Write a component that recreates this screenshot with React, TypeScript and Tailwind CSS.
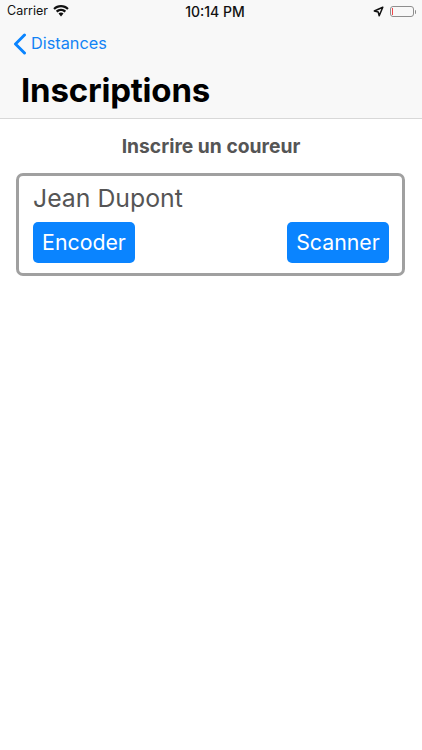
export default function App() {
  const font = "font-['Inter','Liberation_Sans',sans-serif]";
  return (
    <div className={`w-[422px] h-[750px] bg-white flex flex-col overflow-hidden ${font}`}>
      <div className="h-[119px] bg-[#f8f8f8] border-b border-[#d8d8d8] flex flex-col">
        <div className="h-[23px] pl-[7px] pr-[6px] flex items-center relative text-[#111] text-[12.500px]">
          <span>Carrier</span>
          <svg className="ml-[5px] mb-[2px]" width="16" height="12" viewBox="0 0 16 12" fill="#111">
            <path d="M8 0C5 0 2.300 1.200.300 3.200l1.500 1.600C3.400 3.200 5.600 2.200 8 2.200s4.600 1 6.200 2.600l1.500-1.600C13.700 1.200 11 0 8 0z" />
            <path d="M8 3.700c-2 0-3.800.8-5.100 2.100l1.500 1.600c.9-.9 2.200-1.500 3.600-1.500s2.700.6 3.600 1.500l1.500-1.600C11.800 4.500 10 3.700 8 3.700z" />
            <path d="M8 7.500c-1 0-1.800.4-2.500 1L8 11.500l2.500-3c-.7-.6-1.500-1-2.500-1z" />
          </svg>
          <span className="absolute left-[4px] w-[422px] text-center font-medium text-[14px]">10:14 PM</span>
          <div className="ml-auto flex items-center gap-[6px]">
            <svg width="11" height="11" viewBox="0 0 11 11" fill="none" stroke="#111" strokeWidth="1.500" strokeLinejoin="round">
              <path d="M9.800 1.200 1.300 5l3.900 1 1 3.800z" />
            </svg>
            <div className="flex items-center">
              <div className="w-[24px] h-[11px] rounded-[3px] border border-[#8e8e8e] p-[1px] flex">
                <div className="w-[1.500px] bg-[#f0474b]" />
              </div>
              <div className="w-[1.500px] h-[4px] ml-[1px] rounded-r-sm bg-[#8e8e8e]" />
            </div>
          </div>
        </div>
        <div className="h-[41px] pl-[13px] flex items-center">
          <svg width="14" height="22" viewBox="0 0 14 22" fill="none" stroke="#0a84ff" strokeWidth="3" strokeLinecap="round" strokeLinejoin="round">
            <path d="M11.500 2 2.500 11l9 9" />
          </svg>
          <span className="ml-[4px] text-[16.300px] text-[#1183f5]">Distances</span>
        </div>
        <div className="pl-[21px] mt-[6px] text-[33px] leading-[41px] font-bold text-black tracking-[-0.2px]">Inscriptions</div>
      </div>
      <div className="text-center text-[#555] font-bold text-[19.300px] leading-[24px] mt-[15px]">Inscrire un coureur</div>
      <div className="ml-[16px] mr-[17px] mt-[15px] h-[103px] border-[3px] border-[#a0a0a0] rounded-[7px] pl-[14px] pr-[13px] flex flex-col">
        <div className="text-[24.800px] leading-[32px] text-[#555] mt-[6px]">Jean Dupont</div>
        <div className="flex justify-between mt-[8px]">
          <button className="w-[102px] h-[41px] rounded-[5px] bg-[#0a84ff] text-white text-[21.300px]">Encoder</button>
          <button className="w-[102px] h-[41px] rounded-[5px] bg-[#0a84ff] text-white text-[21.300px]">Scanner</button>
        </div>
      </div>
    </div>
  );
}
